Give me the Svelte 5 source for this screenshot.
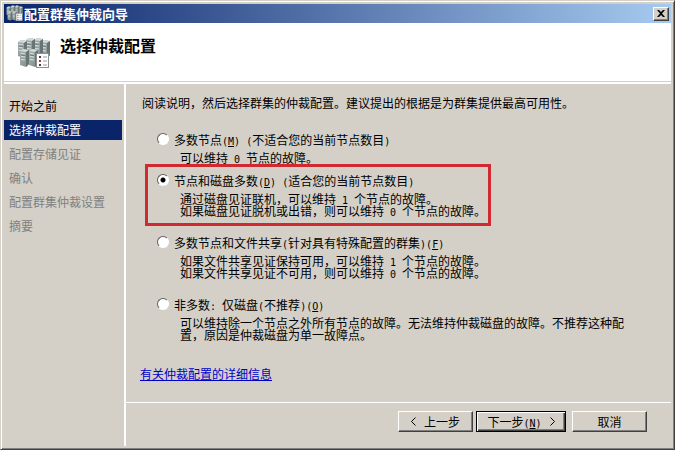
<script>
  let steps = [
    { name: '开始之前', state: 'done' },
    { name: '选择仲裁配置', state: 'current' },
    { name: '配置存储见证', state: 'pending' },
    { name: '确认', state: 'pending' },
    { name: '配置群集仲裁设置', state: 'pending' },
    { name: '摘要', state: 'pending' }
  ];

  let options = [
    {
      id: 'majority', label: '多数节点', key: 'M', note: ' (不适合您的当前节点数目)',
      lines: ['可以维持 0 节点的故障。']
    },
    {
      id: 'disk', label: '节点和磁盘多数', key: 'D', note: ' (适合您的当前节点数目)',
      lines: ['通过磁盘见证联机，可以维持 1 个节点的故障。', '如果磁盘见证脱机或出错，则可以维持 0 个节点的故障。']
    },
    {
      id: 'share', label: '多数节点和文件共享(针对具有特殊配置的群集)', key: 'F', note: '',
      lines: ['如果文件共享见证保持可用，可以维持 1 个节点的故障。', '如果文件共享见证不可用，则可以维持 0 个节点的故障。']
    },
    {
      id: 'none', label: '非多数: 仅磁盘(不推荐)', key: 'O', note: '',
      lines: ['可以维持除一个节点之外所有节点的故障。无法维持仲裁磁盘的故障。不推荐这种配置，原因是仲裁磁盘为单一故障点。']
    }
  ];

  let selected = 'disk';

  // latin characters get the half-width font
  function split(text) {
    return text.split(/([\x20-\x7e]+)/).filter((part) => part);
  }

  function isLatin(part) {
    return /^[\x20-\x7e]/.test(part);
  }
</script>

{#snippet mixed(text)}{#each split(text) as part}{#if isLatin(part)}<span class="en">{part}</span>{:else}{part}{/if}{/each}{/snippet}

{#snippet servers(size)}
  <svg class="servers" width={size} height={size} viewBox="0 0 33 33" aria-hidden="true">
    <defs>
      <linearGradient id="tower{size}" x1="0" x2="1" y1="0" y2="1">
        <stop offset="0" stop-color="#a9b5b3" />
        <stop offset="1" stop-color="#7d8a89" />
      </linearGradient>
    </defs>
    {#each [[24, 2], [17, 0], [9, 0], [1, 2], [12, 11], [3, 11]] as [x, y]}
      <g transform="translate({x} {y})">
        <path d="M0 3L3 1L9 2V16L6 19L0 17Z" fill="url(#tower{size})" />
        <path d="M0 3L3 1L9 2L6 4Z" fill="#d3dbd9" />
        <path d="M6 4L9 2V16L6 19Z" fill="#687473" />
        <path d="M1 5.5L5 6M1 8.5L5 9M1 11.5L5 12" stroke="#dce4e2" />
        <path d="M1 7L5 7.5" stroke="#6c7877" />
      </g>
    {/each}
    <rect x="19.5" y="16.5" width="12" height="14" fill="#fdfdfd" stroke="#8e9090" />
    <rect x="22" y="19" width="2" height="2" fill="#444" />
    <rect x="22" y="23" width="2" height="2" fill="#b03a3a" />
    <rect x="22" y="27" width="2" height="2" fill="#444" />
    <path d="M26 20H30M26 24H30M26 28H30" stroke="#999" />
  </svg>
{/snippet}

<div class="window">
  <div class="titlebar">
    {@render servers(17)}
    <h1>配置群集仲裁向导</h1>
    <button class="close" aria-label="关闭">
      <svg width="8" height="7" viewBox="0 0 8 7"><path d="M0 0H2L4 2L6 0H8L5 3.5L8 7H6L4 5L2 7H0L3 3.5Z" fill="#000" /></svg>
    </button>
  </div>

  <header>
    {@render servers(33)}
    <h2>选择仲裁配置</h2>
  </header>

  <div class="body">
    <nav>
      <ul>
        {#each steps as step}
          <li class={step.state}>{step.name}</li>
        {/each}
      </ul>
    </nav>

    <main>
      <div class="content">
        <p class="intro">阅读说明，然后选择群集的仲裁配置。建议提出的根据是为群集提供最高可用性。</p>

        {#each options as option, i}
          <div class="option" class:tight={i === 0} class:marked={option.id === 'disk'}>
            <label>
              <input type="radio" name="quorum" value={option.id} bind:group={selected} />
              <span>{@render mixed(option.label)}<span class="en">(<u>{option.key}</u>)</span>{@render mixed(option.note)}</span>
            </label>
            {#each option.lines as line}
              <p>{@render mixed(line)}</p>
            {/each}
          </div>
        {/each}

        <a href="#details">有关仲裁配置的详细信息</a>
      </div>

      <footer>
        <button class="btn"><svg width="5" height="9" viewBox="0 0 5 9"><path d="M4.5 0.5L0.5 4.5L4.5 8.5" /></svg>上一步</button>
        <button class="btn default"><span>下一步<span class="en">(<u>N</u>)</span></span><svg width="5" height="9" viewBox="0 0 5 9"><path d="M0.5 0.5L4.5 4.5L0.5 8.5" /></svg></button>
        <button class="btn cancel">取消</button>
      </footer>
    </main>
  </div>
</div>

<style>
  :global(body) {
    margin: 0;
    background: #d4d0c8;
  }

  .window {
    box-sizing: border-box;
    min-height: 100vh;
    display: flex;
    flex-direction: column;
    padding: 3px;
    border: 1px solid;
    border-color: #d4d0c8 #404040 #404040 #d4d0c8;
    box-shadow: inset 1px 1px #fff, inset -1px -1px #808080;
    background: #d4d0c8;
    color: #000;
    font-family: "Noto Sans CJK SC", sans-serif;
    font-size: 12px;
    line-height: 12px;
  }

  h1, h2, p, ul {
    margin: 0;
    padding: 0;
  }

  .en {
    font-family: "DejaVu Sans Mono", monospace;
    font-size: 10px;
    line-height: 8px;
    white-space: pre-wrap;
  }

  .titlebar {
    display: flex;
    align-items: center;
    height: 19px;
    padding: 0 2px;
    background: linear-gradient(to right, #0a246a, #a6caf0);
  }

  h1 {
    flex: 1;
    margin-left: 1px;
    color: #fff;
    font-size: 13px;
    line-height: 18px;
  }

  .close {
    display: flex;
    align-items: center;
    justify-content: center;
    width: 16px;
    height: 14px;
    padding: 0;
    border: 1px solid;
    border-color: #fff #404040 #404040 #fff;
    box-shadow: inset -1px -1px #808080;
    background: #d4d0c8;
  }

  header {
    display: flex;
    gap: 10px;
    height: 44px;
    padding: 14px 13px 0;
    background: #fff;
    border-bottom: 1px solid #d4d0c8;
    box-shadow: 0 2px #fff;
  }

  h2 {
    font-size: 16px;
    line-height: 16px;
  }

  .body {
    flex: 1;
    display: flex;
    margin-top: 2px;
  }

  nav {
    flex: none;
    width: 120px;
    padding-top: 8px;
    border-right: 2px solid #fff;
  }

  ul {
    list-style: none;
  }

  li {
    margin: 4px 2px 4px 0;
    padding: 0 5px;
    line-height: 20px;
  }

  .current {
    background: #0a246a;
    color: #fff;
  }

  .pending {
    color: #808080;
  }

  main {
    flex: 1;
    display: flex;
    flex-direction: column;
  }

  .content {
    padding: 13px 38px 0 14px;
  }

  .intro {
    margin: 0 0 14px 2px;
  }

  .option {
    width: fit-content;
    margin-left: 5px;
    padding: 2px 2px 6px 9px;
    border: 3px solid transparent;
  }

  .tight {
    padding-bottom: 0;
    border-bottom: 0;
  }

  .marked {
    border-color: #d02a30;
  }

  .option p {
    padding-left: 23px;
  }

  label {
    display: flex;
    align-items: center;
    gap: 5px;
    height: 24px;
  }

  input {
    appearance: none;
    width: 12px;
    height: 12px;
    margin: 0 0 2px;
    border: 1px solid;
    border-color: #606060 #fff #fff #606060;
    border-radius: 50%;
    background: #fff;
  }

  input:checked {
    background: radial-gradient(circle, #000 2px, #fff 3px);
  }

  a {
    display: inline-block;
    margin-top: 18px;
    color: #0000c8;
  }

  footer {
    display: flex;
    justify-content: flex-end;
    gap: 3px;
    margin-top: auto;
    padding: 8px 24px 14px;
    border-top: 1px solid #fff;
  }

  .btn {
    display: flex;
    align-items: center;
    justify-content: center;
    gap: 8px;
    min-width: 75px;
    height: 21px;
    padding: 0;
    border: 1px solid;
    border-color: #fff #404040 #404040 #fff;
    box-shadow: inset -1px -1px #808080;
    background: #d4d0c8;
    color: #000;
    font-family: inherit;
    font-size: 12px;
    line-height: 12px;
  }

  .btn path {
    fill: none;
    stroke: #000;
  }

  .default {
    min-width: 90px;
    border-color: #000;
    box-shadow: inset 1px 1px #fff, inset -1px -1px #404040, inset -2px -2px #808080;
  }

  .cancel {
    margin-left: 3px;
  }
</style>
